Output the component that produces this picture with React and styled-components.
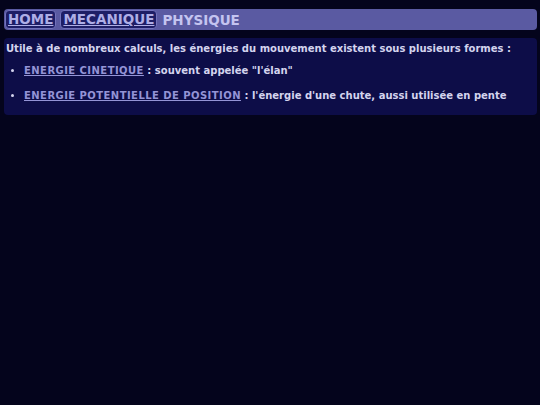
import React from "react";
import styled, { createGlobalStyle } from "styled-components";

const Global = createGlobalStyle`
  html, body {
    margin: 0;
    background: #04041c;
  }
  body {
    font-family: "DejaVu Sans", Verdana, sans-serif;
    font-weight: bold;
    color: #d4d4ee;
  }
`;

const Page = styled.div`
  padding: 9px 3px 0 4px;
`;

const Nav = styled.nav`
  display: flex;
  align-items: center;
  gap: 4px;
  height: 21px;
  padding: 0 2px 0 1px;
  background: #5a5aa2;
  border-radius: 4px;
  font-size: 13.5px;
`;

const Crumb = styled.a`
  display: block;
  padding: 0 2px;
  line-height: 17px;
  color: #aeaee6;
  background: #1e1e66;
  border: 1px solid #7272bc;
  border-radius: 4px;
  text-decoration: underline;
`;

const Current = styled.span`
  color: #c4c4f0;
  padding: 0 1px;
`;

const Panel = styled.section`
  margin-top: 8px;
  padding: 4px 2px 12px 2px;
  background: #0d0d48;
  border-radius: 4px;
  font-size: 10px;
`;

const Intro = styled.p`
  margin: 0;
  line-height: 14px;
`;

const List = styled.ul`
  margin: 8px 0 0;
  padding-left: 18px;
  display: flex;
  flex-direction: column;
  gap: 11px;
`;

const Item = styled.li`
  line-height: 14px;
`;

const Term = styled.a`
  color: #9494d6;
  letter-spacing: 0.45px;
  text-decoration: underline;
`;

export default function App() {
  return (
    <>
      <Global />
      <Page>
        <Nav>
          <Crumb>HOME</Crumb>
          <Crumb>MECANIQUE</Crumb>
          <Current>PHYSIQUE</Current>
        </Nav>
        <Panel>
          <Intro>
            Utile à de nombreux calculs, les énergies du mouvement existent sous plusieurs formes :
          </Intro>
          <List>
            <Item>
              <Term>ENERGIE CINETIQUE</Term> : souvent appelée "l'élan"
            </Item>
            <Item>
              <Term>ENERGIE POTENTIELLE DE POSITION</Term> : l'énergie d'une chute, aussi utilisée en pente
            </Item>
          </List>
        </Panel>
      </Page>
    </>
  );
}
